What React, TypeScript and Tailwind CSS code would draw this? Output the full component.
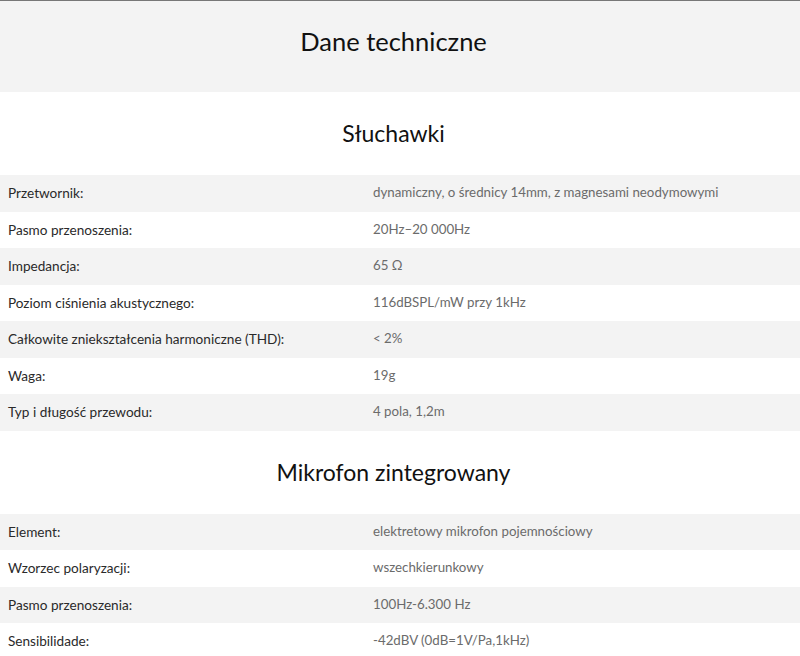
const headphones: [string, string][] = [
  ["Przetwornik:", "dynamiczny, o średnicy 14mm, z magnesami neodymowymi"],
  ["Pasmo przenoszenia:", "20Hz–20 000Hz"],
  ["Impedancja:", "65 Ω"],
  ["Poziom ciśnienia akustycznego:", "116dBSPL/mW przy 1kHz"],
  ["Całkowite zniekształcenia harmoniczne (THD):", "< 2%"],
  ["Waga:", "19g"],
  ["Typ i długość przewodu:", "4 pola, 1,2m"],
];

const mic: [string, string][] = [
  ["Element:", "elektretowy mikrofon pojemnościowy"],
  ["Wzorzec polaryzacji:", "wszechkierunkowy"],
  ["Pasmo przenoszenia:", "100Hz-6.300 Hz"],
  ["Sensibilidade:", "-42dBV (0dB=1V/Pa,1kHz)"],
];

function SpecTable({ rows }: { rows: [string, string][] }) {
  return (
    <div className="flex flex-col">
      {rows.map(([label, value], i) => (
        <div
          key={label + i}
          className={`grid h-[36.5px] grid-cols-[365px_1fr] items-center px-2 ${
            i % 2 === 0 ? "bg-[#f3f3f3]" : "bg-white"
          }`}
        >
          <span className="text-[13.6px] text-[#2a2a2a]">{label}</span>
          <span className="text-[13.3px] text-[#6b6b6b]">{value}</span>
        </div>
      ))}
    </div>
  );
}

function SectionTitle({ children }: { children: string }) {
  return (
    <div className="flex h-[83px] items-center justify-center bg-white pr-[13px] text-[23px] text-[#111]">
      {children}
    </div>
  );
}

export default function App() {
  return (
    <div className="h-[656px] w-[800px] overflow-hidden bg-white font-['Lato','Open_Sans',sans-serif]">
      <div className="h-px bg-[#777]" />
      <div className="flex h-[91px] items-center justify-center bg-[#f3f3f3] pr-[13px] pb-[10px]">
        <h1 className="text-[25.5px] text-[#111]">Dane techniczne</h1>
      </div>
      <SectionTitle>Słuchawki</SectionTitle>
      <SpecTable rows={headphones} />
      <SectionTitle>Mikrofon zintegrowany</SectionTitle>
      <SpecTable rows={mic} />
    </div>
  );
}
